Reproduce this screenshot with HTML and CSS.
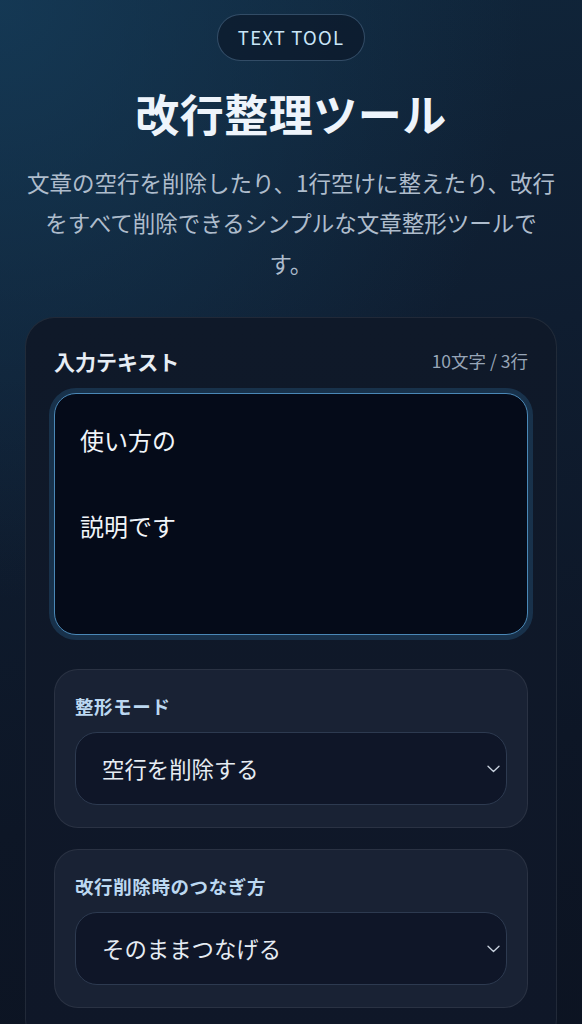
FILE: index.html
```html
<!DOCTYPE html>
<html lang="ja">
<head>
<meta charset="utf-8">
<meta name="viewport" content="width=device-width, initial-scale=1">
<title>改行整理ツール</title>
<link rel="stylesheet" href="styles.css">
</head>
<body>
<main class="page">
  <header class="hero">
    <span class="badge">TEXT TOOL</span>
    <h1 class="title">改行整理ツール</h1>
    <p class="lead">文章の空行を削除したり、1行空けに整えたり、改行をすべて削除できるシンプルな文章整形ツールです。</p>
  </header>

  <section class="card">
    <div class="card-head">
      <h2 class="card-title">入力テキスト</h2>
      <span class="count">10文字 / 3行</span>
    </div>
    <textarea class="input" spellcheck="false">使い方の

説明です</textarea>

    <div class="panel">
      <label class="panel-label">整形モード</label>
      <div class="select-wrap">
        <select class="select">
          <option>空行を削除する</option>
          <option>1行空けに整える</option>
          <option>改行をすべて削除する</option>
        </select>
        <svg class="chev" width="13" height="8" viewBox="0 0 13 8" aria-hidden="true"><path d="M1 1.2 L6.5 6.5 L12 1.2" fill="none" stroke="#cbd5e1" stroke-width="1.3" stroke-linecap="round" stroke-linejoin="round"/></svg>
      </div>
    </div>

    <div class="panel">
      <label class="panel-label">改行削除時のつなぎ方</label>
      <div class="select-wrap">
        <select class="select">
          <option>そのままつなげる</option>
          <option>スペースでつなげる</option>
        </select>
        <svg class="chev" width="13" height="8" viewBox="0 0 13 8" aria-hidden="true"><path d="M1 1.2 L6.5 6.5 L12 1.2" fill="none" stroke="#cbd5e1" stroke-width="1.3" stroke-linecap="round" stroke-linejoin="round"/></svg>
      </div>
    </div>
  </section>
</main>
</body>
</html>
```

FILE: styles.css
```css
* { box-sizing: border-box; }

html, body { margin: 0; padding: 0; }

body {
  min-height: 100vh;
  font-family: "Noto Sans CJK JP", "Noto Sans", sans-serif;
  color: #e8eef6;
  background:
    radial-gradient(ellipse 90% 55% at 0% 0%, rgba(22, 62, 92, 0.75) 0%, rgba(22, 62, 92, 0) 100%),
    linear-gradient(170deg, #10263b 0%, #0f1d30 35%, #0d1626 70%, #0c1321 100%);
}

.page {
  padding: 14px 24px 40px;
}

.hero {
  text-align: center;
}

.badge {
  display: inline-block;
  height: 47px;
  line-height: 45px;
  padding: 0 20px;
  border: 1px solid rgba(130, 175, 215, 0.32);
  border-radius: 999px;
  background: rgba(12, 24, 42, 0.7);
  color: #c9e6f8;
  font-size: 18.5px;
  letter-spacing: 1.2px;
}

.title {
  margin: 24px 0 0;
  font-size: 44px;
  line-height: 57px;
  font-weight: 700;
  color: #eef4fb;
  letter-spacing: 0.5px;
}

.lead {
  margin: 20px 0 0;
  font-size: 22.5px;
  line-height: 40.3px;
  color: #aebccc;
  text-spacing-trim: space-all;
}

.card {
  margin: 34px 1px 0;
  padding: 27px 28px 40px;
  border: 1px solid rgba(255, 255, 255, 0.08);
  border-radius: 30px;
  background: linear-gradient(180deg, #0f1929 0%, #0f1728 100%);
}

.card-head {
  display: flex;
  align-items: center;
  justify-content: space-between;
  height: 32px;
}

.card-title {
  margin: 0;
  font-size: 21px;
  font-weight: 700;
  color: #e6edf5;
}

.count {
  font-size: 17.5px;
  color: #97a5b7;
}

.input {
  display: block;
  width: 100%;
  height: 242px;
  margin-top: 16px;
  padding: 24px 25px;
  border: 1.5px solid #4a88b7;
  border-radius: 22px;
  background: #050b19;
  box-shadow: 0 0 0 5px rgba(44, 96, 140, 0.35);
  color: #f1f5f9;
  font-family: inherit;
  font-size: 24px;
  line-height: 43px;
  resize: none;
  outline: none;
  overflow: hidden;
}

.panel {
  margin-top: 21px;
  padding: 23px 20px 22px;
  border: 1px solid rgba(255, 255, 255, 0.075);
  border-radius: 24px;
  background: #192234;
}

.input + .panel {
  margin-top: 34px;
}

.panel-label {
  display: block;
  font-size: 18.5px;
  line-height: 26px;
  font-weight: 700;
  letter-spacing: 0.6px;
  color: #bcd8f1;
}

.select-wrap {
  position: relative;
  margin-top: 13px;
}

.select {
  display: block;
  width: 100%;
  height: 73px;
  padding: 0 40px 0 26px;
  border: 1px solid #2d3a50;
  border-radius: 22px;
  background: #0f1628;
  color: #e6ecf3;
  font-family: inherit;
  font-size: 22.4px;
  -webkit-appearance: none;
  appearance: none;
  outline: none;
}

.chev {
  position: absolute;
  right: 7px;
  top: 50%;
  margin-top: -3px;
  pointer-events: none;
}
```
